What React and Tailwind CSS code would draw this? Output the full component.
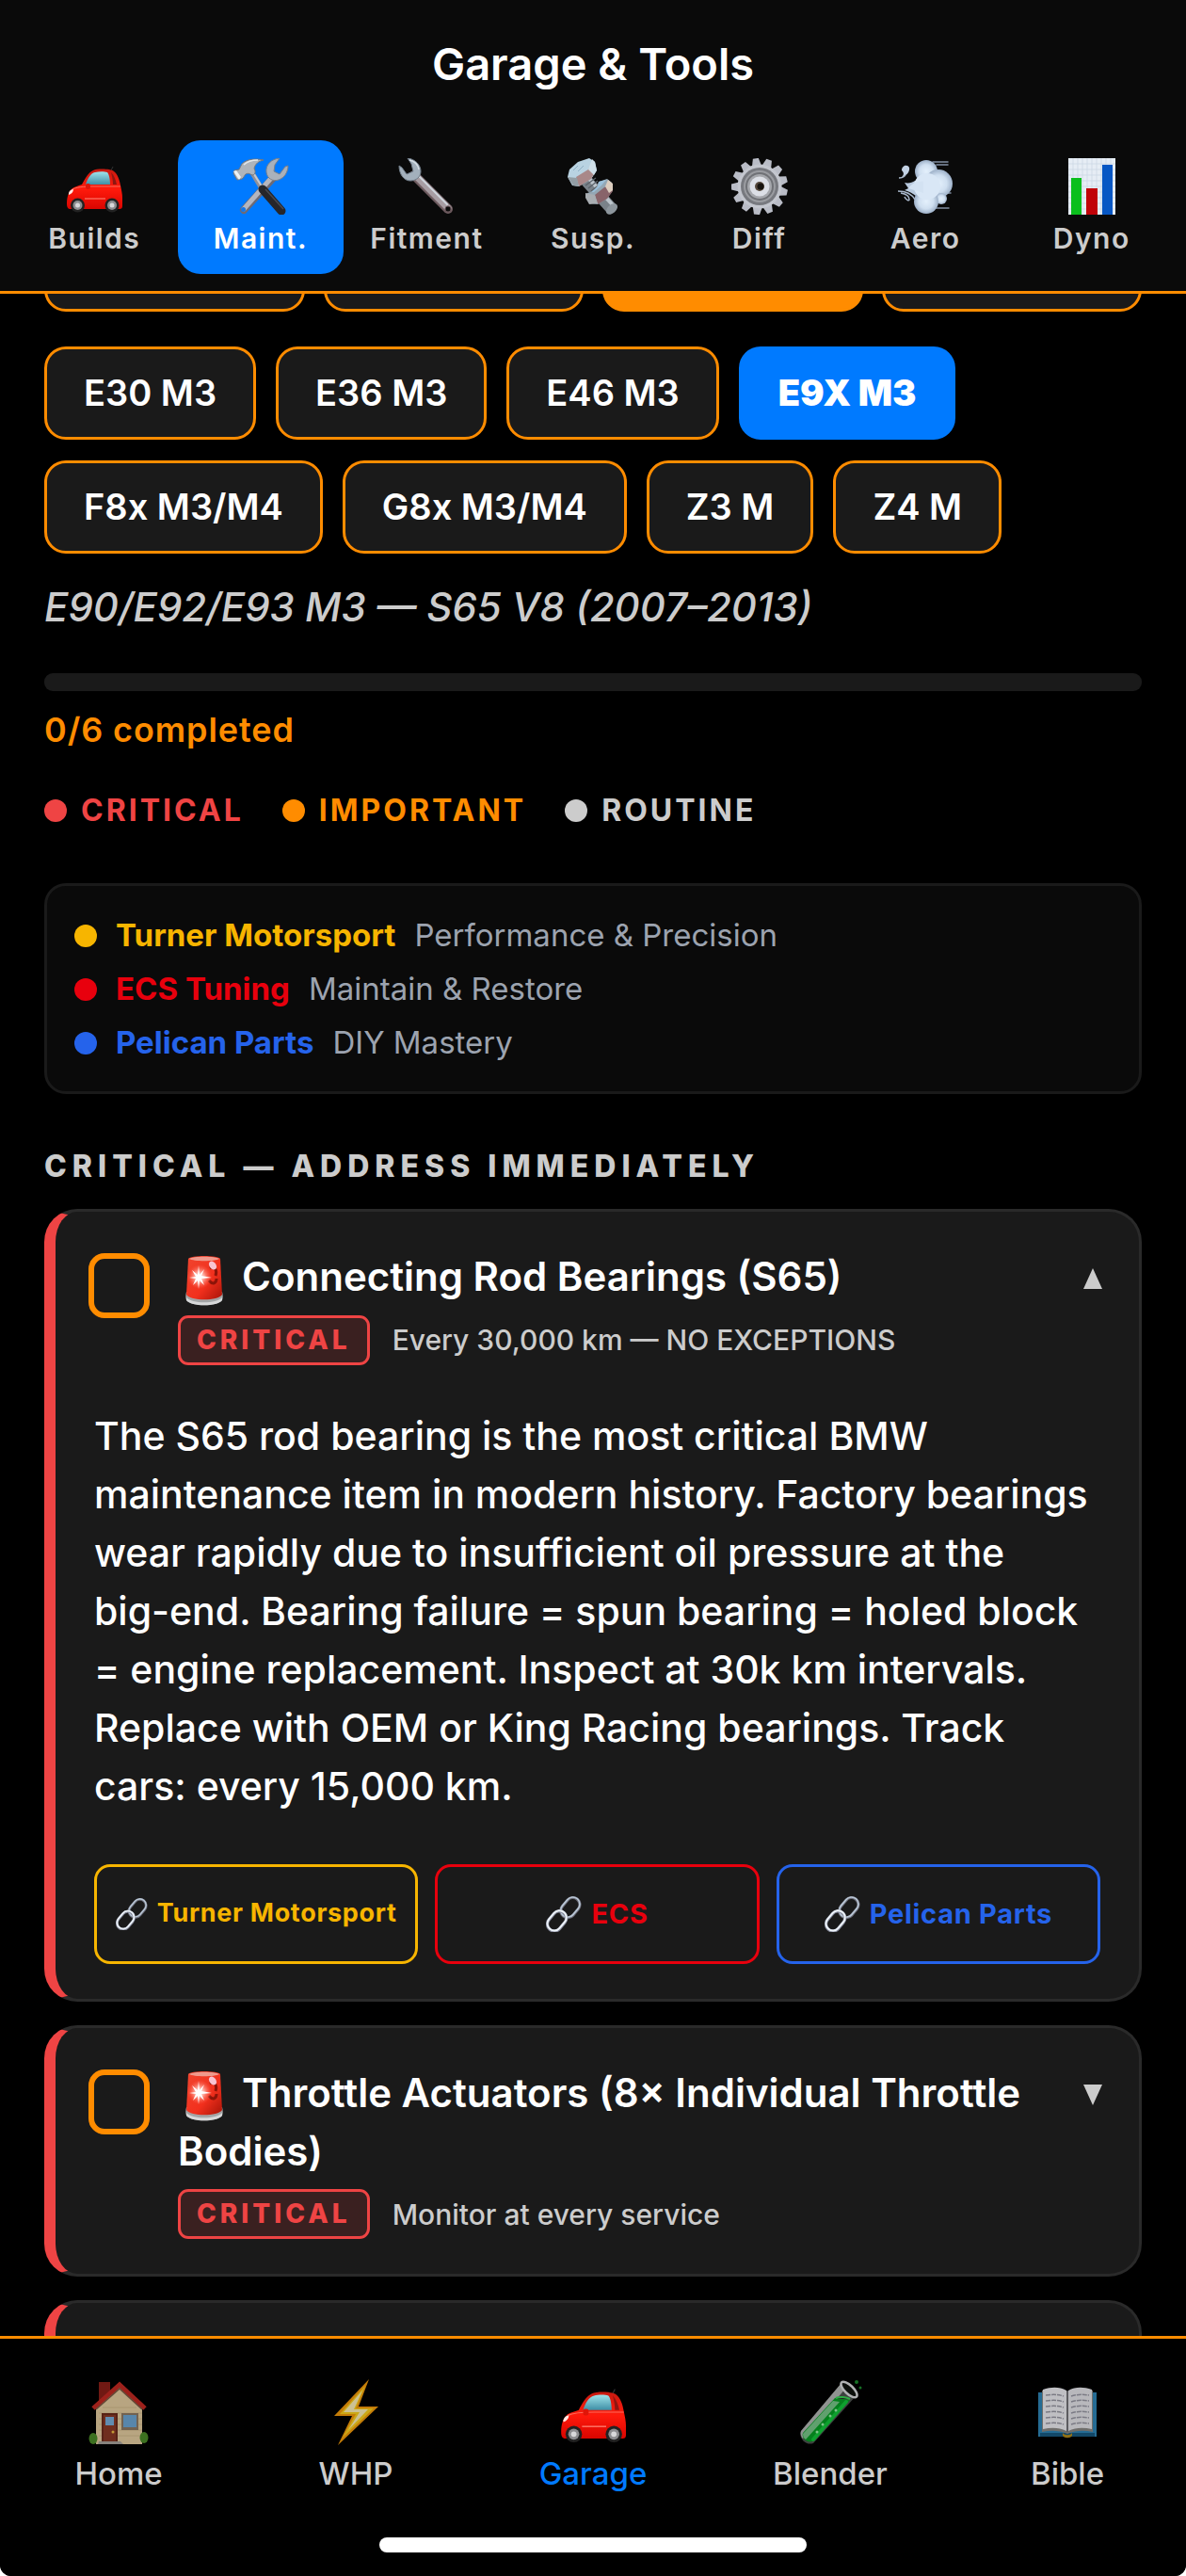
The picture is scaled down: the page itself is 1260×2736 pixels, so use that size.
import { useState } from "react";

const CarIcon = ({ className }) => (
  <svg className={className} viewBox="0 0 60 60" aria-hidden>
    <defs>
      <linearGradient id="carBody" x1="0" y1="0" x2="0" y2="1">
        <stop offset="0" stopColor="#c81a10" />
        <stop offset="0.5" stopColor="#ff1a0c" />
        <stop offset="1" stopColor="#d90500" />
      </linearGradient>
      <linearGradient id="carGlass" x1="0" y1="0" x2="0" y2="1">
        <stop offset="0" stopColor="#9fe3ea" />
        <stop offset="1" stopColor="#3f8fa6" />
      </linearGradient>
    </defs>
    <path d="M48 13l2-4" stroke="#333" strokeWidth="1" />
    <path
      d="M1 48c0-7 2-13 6-16 3-2 7-3 10-4 3-6 7-13 12-15 4-2 18-2 22 1 4 3 6 9 7 15 1 5 2 9 2 13v9c0 2-1 3-3 3H5c-3 0-4-2-4-6Z"
      fill="url(#carBody)"
    />
    <path d="M21 28c2-6 5-12 10-13 4-1 10-1 13 0 2 2 3 8 3 13Z" fill="url(#carGlass)" />
    <path d="M48 15c3 3 5 8 6 13h-4c0-5-1-9-2-13Z" fill="#8e1712" />
    <path d="M7 33c6-3 16-3 24-3h27" stroke="#ff6a5a" strokeWidth="1" fill="none" />
    <path d="M20 43h22" stroke="#ff7a6c" strokeWidth="1.2" />
    <path d="M3 37c1-3 3-4 5-4 0 3-2 5-5 6Z" fill="#ffe9e4" />
    <rect x="21" y="27" width="5" height="6" rx="2" fill="#e01508" />
    <circle cx="12.500" cy="50" r="7.500" fill="#222" />
    <circle cx="12.500" cy="50" r="5" fill="#8d8d90" />
    <circle cx="12.500" cy="50" r="2.500" fill="#d8d8da" />
    <circle cx="49" cy="50" r="7.500" fill="#222" />
    <circle cx="49" cy="50" r="5" fill="#8d8d90" />
    <circle cx="49" cy="50" r="2.500" fill="#d8d8da" />
  </svg>
);

const ToolsIcon = ({ className }) => (
  <svg className={className} viewBox="0 0 60 60" aria-hidden>
    <path d="M44 20 12 55" stroke="#6e6a74" strokeWidth="8" strokeLinecap="round" />
    <path d="M43 19 12 54" stroke="#b5b6bf" strokeWidth="5" strokeLinecap="round" />
    <path
      d="M50 0c-9 1-15 7-14 15 1 7 7 10 13 8 6-2 10-8 10-15l-3 1-6 8-6-3 1-7Z"
      fill="#a9b1bb"
      stroke="#7b808a"
      strokeWidth="1"
    />
    <circle cx="11.500" cy="54.500" r="2.500" fill="#1577e8" />
    <path d="M20 14 32 34" stroke="#8f9099" strokeWidth="5" />
    <path d="M21 14 33 33" stroke="#c6c9cf" strokeWidth="2" />
    <path d="M32 33 52 56" stroke="#26262a" strokeWidth="9" strokeLinecap="round" />
    <path d="M35 33 54 54" stroke="#4a4a50" strokeWidth="1.500" />
    <path
      d="M10 6c5-5 14-6 23-4-5 1-9 4-10 9 2 3 1 6-1 7-3 0-4-3-8-1-2 2-2 4-4 5L5 23l-4-7 1-3 5-1Z"
      fill="#aeb4bb"
      stroke="#73777e"
      strokeWidth="1"
    />
    <path d="m1 14 3-1 5 7-2 3Z" fill="#eef1f4" />
    <path d="M12 7c4-4 9-5 15-5" stroke="#e3e7ea" strokeWidth="1.500" fill="none" />
  </svg>
);

const WrenchIcon = ({ className }) => (
  <svg className={className} viewBox="0 0 60 60" aria-hidden>
    <path d="M17 18 53 54" stroke="#6f5c60" strokeWidth="10" strokeLinecap="round" />
    <path d="M17 17 53 53" stroke="#a79da3" strokeWidth="7" strokeLinecap="round" />
    <path d="M20 17 52 49" stroke="#cfd5dc" strokeWidth="2" strokeLinecap="round" />
    <path
      d="M10 0c8 1 14 7 14 14 0 6-5 10-11 10C6 24 1 17 1 8l3 2 5 7 7-3-2-8Z"
      fill="#a3b0bc"
      stroke="#6f7b87"
      strokeWidth="1"
    />
    <path d="M12 2c5 1 9 5 10 10" stroke="#d5dee5" strokeWidth="1.500" fill="none" />
    <circle cx="53" cy="54" r="3" fill="#0a0a0a" stroke="#5d4c50" strokeWidth="1" />
  </svg>
);

const BoltNutIcon = ({ className }) => (
  <svg className={className} viewBox="0 0 60 60" aria-hidden>
    <path d="M23 24 50 54" stroke="#7a8289" strokeWidth="13" />
    <path d="M26 22 52 51" stroke="#bcc5cc" strokeWidth="4" />
    <ellipse cx="50" cy="54" rx="7" ry="4.500" transform="rotate(-42 50 54)" fill="#8d969d" />
    <path
      d="m20 26 10-7m-8 10 11-8m-8 11 10-8m-7 11 10-8"
      stroke="#596168"
      strokeWidth="1.200"
    />
    <path d="m3 20 2-8L14 4l12-4 6 4 2 9-6 9-13 8-7-1Z" fill="#b9d3e2" />
    <path d="m12 20 13-8 5-8 3 9-5 9-13 8Z" fill="#a98889" />
    <path d="m25 12 4-11 3 3 2 9-3 5Z" fill="#cfdfe8" />
    <path d="m3 20 10 1 2 9-6-1Z" fill="#939ea5" />
    <path d="m9 13 5-5m0 6 6-6" stroke="#8eb0c4" strokeWidth="1" />
    <path d="m36 25 9-3 5 4 1 8-6 9-10 6-9-1-4-7 2-4 8-2Z" fill="#94a7b4" />
    <path d="m32 39 10-8 8-3 1 7-6 8-10 6Z" fill="#88646a" />
    <path d="m43 30 3-7 5 4v7l-4 3Z" fill="#dccdbf" />
    <path d="m22 37 10 2 3 9-9 1-4-7Z" fill="#a8adb1" />
    <path d="m31 36 8-7 5-6-8 2-1 5-7 6Z" fill="#9bc0da" />
  </svg>
);

const teeth = [0, 1, 2, 3, 4, 5, 6, 7, 8, 9, 10, 11, 12];

const GearIcon = ({ className }) => (
  <svg className={className} viewBox="0 0 60 60" aria-hidden>
    {teeth.map((t) => (
      <path
        key={t}
        d="M25 8 27 0h6l2 8Z"
        fill="#b9bcc6"
        transform={`rotate(${t * 27.69 - 8} 30 30)`}
      />
    ))}
    <circle cx="30" cy="30" r="23.500" fill="#c3c6ce" />
    <circle cx="30" cy="30" r="20" fill="#77797f" />
    <circle cx="30" cy="30" r="17" fill="#9a9ca1" />
    <circle cx="30" cy="30" r="15" fill="#6f7176" />
    <circle cx="30" cy="30" r="13" fill="#a5a7ac" />
    <circle cx="30" cy="30" r="10.500" fill="#dcdfe6" />
    <circle cx="30" cy="30" r="5" fill="#55483c" />
    <circle cx="31" cy="30" r="3.500" fill="#17140f" />
  </svg>
);

const WindIcon = ({ className }) => (
  <svg className={className} viewBox="0 0 60 60" aria-hidden>
    <defs>
      <radialGradient id="puff">
        <stop offset="0" stopColor="#e4f0fc" />
        <stop offset="0.6" stopColor="#cfdff0" />
        <stop offset="1" stopColor="#9db0c8" />
      </radialGradient>
    </defs>
    <path
      d="M38 4h16M42 7h12M38 53h17M44 37h13"
      stroke="#8290a4"
      strokeWidth="1.500"
      strokeLinecap="round"
    />
    <path
      d="M8 26c4 1 8 0 11-2l10 1v14l-9 1c-4-3-8-5-12-6l4-2Z"
      fill="#b9cade"
    />
    <circle cx="31" cy="14" r="12" fill="url(#puff)" />
    <circle cx="44" cy="27" r="15" fill="url(#puff)" />
    <circle cx="47" cy="43" r="6" fill="url(#puff)" />
    <circle cx="31" cy="46" r="13" fill="url(#puff)" />
    <circle cx="32" cy="30" r="14" fill="#d9e7f6" />
    <path d="M12 32c4-5 8-8 16-7v12Z" fill="#d3e2f2" />
    <path d="M5 13c0-5 6-7 8-3 1 4-3 9-8 10 2-2 3-4 0-7Z" fill="#c3d2e4" />
    <path d="M2 21c3 0 5-1 7-3" stroke="#a9b8cb" strokeWidth="1.500" fill="none" />
    <path d="M1 35c8 0 14 2 18 9M4 37c6 1 9 4 9 7 0 2-4 0-5-3" stroke="#a9b8cb" strokeWidth="1.500" fill="none" />
  </svg>
);

const ChartIcon = ({ className }) => (
  <svg className={className} viewBox="0 0 60 60" aria-hidden>
    <rect x="5" y="0" width="50" height="60" fill="#e6edf5" />
    <path
      d="M10 0v60M15 0v60M20 0v60M25 0v60M30 0v60M35 0v60M40 0v60M45 0v60M50 0v60M5 6h50M5 12h50M5 18h50M5 24h50M5 30h50M5 36h50M5 42h50M5 48h50M5 54h50"
      stroke="#c9d5e2"
      strokeWidth="0.700"
    />
    <rect x="8" y="21" width="11" height="39" fill="#0abf1c" />
    <rect x="24" y="32" width="12" height="28" fill="#c00208" />
    <rect x="41" y="7" width="11" height="53" fill="#0757c4" />
  </svg>
);

const HomeIcon = ({ className }) => (
  <svg className={className} viewBox="0 0 70 70" aria-hidden>
    <rect x="14" y="3" width="12" height="22" fill="#8c2018" />
    <path d="M11 30 35 7l25 23v39H11Z" fill="#e6cfa2" />
    <path d="M18 30h36M14 36h46M14 42h46M14 48h46M14 54h46M14 60h46" stroke="#d0b788" strokeWidth="0.800" />
    <path d="M8 31 36 6l27 25" stroke="#c52a22" strokeWidth="5" fill="none" />
    <path d="M11 32 36 10l24 22" stroke="#7c5842" strokeWidth="1.500" fill="none" />
    <rect x="17" y="36" width="17" height="31" fill="#6d2c1c" />
    <rect x="19" y="38" width="13" height="28" fill="#8b3a26" />
    <rect x="21" y="40" width="9" height="9" fill="#7ab0dc" />
    <circle cx="29" cy="56" r="1.500" fill="#f3c244" />
    <rect x="38" y="36" width="18" height="18" fill="#8f7b64" />
    <rect x="40" y="38" width="14" height="13" fill="#6ea8d6" />
    <ellipse cx="8" cy="63" rx="4.500" ry="6" fill="#4c8c28" />
    <ellipse cx="62" cy="62" rx="4.500" ry="6" fill="#4c8c28" />
    <path d="M14 66h23l3 3H13Z" fill="#a9a39d" />
  </svg>
);

const BoltIcon = ({ className }) => (
  <svg className={className} viewBox="0 0 70 70" aria-hidden>
    <path d="M49 0 12 39h19L16 70l43-41H38Z" fill="#f59c0a" />
    <path d="M45 7 18 37h17L21 62l33-31H35Z" fill="#ffd21c" />
    <path d="M42 12 22 35h17L27 54l21-22H33Z" fill="#fff3b8" />
  </svg>
);

const TubeIcon = ({ className }) => (
  <svg className={className} viewBox="0 0 70 70" aria-hidden>
    <path d="M47 4 4 55c-3 7 5 16 13 13l46-51Z" fill="#4d524f" />
    <path d="M47 4 4 55c-1 3 0 6 2 8L52 9Z" fill="#b4b8b6" />
    <path d="M40 20 6 57c-2 5 4 11 10 9l40-44Z" fill="#07a025" />
    <path d="M38 23 6 58c0 3 1 5 3 6l36-40Z" fill="#79c98a" />
    <path d="M52 24 17 64" stroke="#12c93a" strokeWidth="4" strokeLinecap="round" />
    <ellipse cx="55" cy="11" rx="11" ry="4.500" transform="rotate(44 55 11)" fill="#101410" stroke="#dcdfe0" strokeWidth="2.500" />
    <path d="M41 20c4-2 11-1 15 1" stroke="#38d955" strokeWidth="2" />
    <circle cx="35" cy="39" r="1.500" fill="#9df5aa" />
    <circle cx="27" cy="48" r="1.500" fill="#9df5aa" />
    <circle cx="41" cy="33" r="1.500" fill="#9df5aa" />
    <circle cx="21" cy="56" r="1.500" fill="#9df5aa" />
    <circle cx="63" cy="3" r="2" fill="#1c8d2e" />
    <circle cx="67" cy="9" r="1.500" fill="#1c8d2e" />
  </svg>
);

const BookIcon = ({ className }) => (
  <svg className={className} viewBox="0 0 70 70" aria-hidden>
    <path d="M4 14h62v47H4Z" fill="#2f86b8" />
    <path d="M6 57h58v4H6Z" fill="#185a82" />
    <path d="M8 12c9-3 19-3 27 1 8-4 18-4 27-1v44c-9-2-18-2-27 2-9-4-18-4-27-2Z" fill="#8b8a86" />
    <path d="M9 11c9-3 18-3 25 1v43c-8-4-16-4-25-2Z" fill="#efeff4" />
    <path d="M61 11c-9-3-18-3-25 1v43c8-4 16-4 25-2Z" fill="#e6e6ec" />
    <path
      d="M12 17c7-1 13-1 19 1m-19 5c7-1 13-1 19 1m-19 5c7-1 13-1 19 1m-19 5c7-1 13-1 19 1m-19 5c7-1 13-1 19 1m-19 5c7-1 13-1 19 1M39 18c6-2 12-2 19-1m-19 7c6-2 12-2 19-1m-19 7c6-2 12-2 19-1m-19 7c6-2 12-2 19-1m-19 7c6-2 12-2 19-1m-19 7c6-2 12-2 19-1"
      stroke="#9a9aa6"
      strokeWidth="1.500"
      strokeDasharray="5 1"
      fill="none"
    />
    <path d="M35 12v44" stroke="#6d6d74" strokeWidth="1.500" />
    <path d="M30 57c2 3 8 3 10 0v3c-2 3-8 3-10 0Z" fill="#b58c1d" />
  </svg>
);

const SirenIcon = ({ className }) => (
  <svg className={className} viewBox="0 0 56 56" aria-hidden>
    <defs>
      <linearGradient id="sirenDome" x1="0" y1="0" x2="1" y2="1">
        <stop offset="0" stopColor="#f0452f" />
        <stop offset="0.6" stopColor="#f2301d" />
        <stop offset="1" stopColor="#a81408" />
      </linearGradient>
      <radialGradient id="sirenGlow">
        <stop offset="0" stopColor="#fff" />
        <stop offset="0.4" stopColor="#ffb0a4" stopOpacity="0.900" />
        <stop offset="1" stopColor="#ff5a48" stopOpacity="0" />
      </radialGradient>
    </defs>
    <path d="M9 40h38c1 4 1 7 0 9-5 7-33 7-38 0-1-2-1-5 0-9Z" fill="#a3a5a6" />
    <path d="M9 46c6 7 32 7 38 0v3c-5 7-33 7-38 0Z" fill="#d7d8d9" />
    <path d="M11 5c2-4 32-4 34 0l2 38c-4 7-34 7-38 0Z" fill="url(#sirenDome)" />
    <path d="M12 5c4-3 28-3 32 0-4 3-28 3-32 0Z" fill="#ef9a8d" />
    <path d="M34 15c5-3 8 2 6 8M33 28c4 5 8 3 8-2" stroke="#8c1409" strokeWidth="3" fill="none" />
    <ellipse cx="37" cy="12" rx="3.500" ry="5" transform="rotate(-35 37 12)" fill="#f8c3d2" />
    <circle cx="23" cy="24" r="13" fill="url(#sirenGlow)" />
    <path
      d="m22 12 1 10 5-6-3 7 11 2-11 1 3 7-5-5-1 9-1-9-5 5 3-7-7-1 7-1-4-7 6 5Z"
      fill="#fff"
    />
  </svg>
);

const LinkIcon = ({ className }) => (
  <svg className={className} viewBox="2 2 36 36" fill="none" aria-hidden>
    <rect x="-7" y="-11" width="14" height="22" rx="7" transform="translate(26.500 13.500) rotate(40)" stroke="#6b6c78" strokeWidth="3" />
    <rect x="-7" y="-11" width="14" height="22" rx="7" transform="translate(26.500 13) rotate(40)" stroke="#b9c7d6" strokeWidth="1.600" />
    <rect x="-7" y="-11" width="14" height="22" rx="7" transform="translate(13 27) rotate(40)" stroke="#85899a" strokeWidth="3.200" />
    <rect x="-7" y="-11" width="14" height="22" rx="7" transform="translate(13 26.500) rotate(40)" stroke="#eef4fa" strokeWidth="1.900" />
  </svg>
);

const tools = [
  { id: "builds", label: "Builds", Icon: CarIcon },
  { id: "maint", label: "Maint.", Icon: ToolsIcon },
  { id: "fitment", label: "Fitment", Icon: WrenchIcon },
  { id: "susp", label: "Susp.", Icon: BoltNutIcon },
  { id: "diff", label: "Diff", Icon: GearIcon },
  { id: "aero", label: "Aero", Icon: WindIcon },
  { id: "dyno", label: "Dyno", Icon: ChartIcon },
];

const chassis = [
  "E30 M3",
  "E36 M3",
  "E46 M3",
  "E9X M3",
  "F8x M3/M4",
  "G8x M3/M4",
  "Z3 M",
  "Z4 M",
];

const vendors = [
  { name: "Turner Motorsport", note: "Performance & Precision", dot: "bg-[#f7b500]", text: "text-[#f7b500]" },
  { name: "ECS Tuning", note: "Maintain & Restore", dot: "bg-[#e8000d]", text: "text-[#e8000d]" },
  { name: "Pelican Parts", note: "DIY Mastery", dot: "bg-[#2563eb]", text: "text-[#2563eb]" },
];

const priorities = [
  { name: "CRITICAL", dot: "bg-[#ef4444]", text: "text-[#ef4444]" },
  { name: "IMPORTANT", dot: "bg-[#ff8c00]", text: "text-[#ff8c00]" },
  { name: "ROUTINE", dot: "bg-[#cccccc]", text: "text-[#cccccc]" },
];

const shopLinks = [
  { name: "Turner Motorsport", style: "border-[#f7b500] text-[#f7b500] text-[27px]", icon: "h-[34px] w-[34px]" },
  { name: "ECS", style: "border-[#e8000d] text-[#e8000d] text-[29px]", icon: "h-[38px] w-[38px]" },
  { name: "Pelican Parts", style: "border-[#2563eb] text-[#2563eb] text-[29px]", icon: "h-[38px] w-[38px]" },
];

const items = [
  {
    id: "rod-bearings",
    title: "Connecting Rod Bearings (S65)",
    interval: "Every 30,000 km — NO EXCEPTIONS",
    detail: (
      <>
        The S65 rod bearing is the most critical BMW maintenance item in modern history. Factory
        bearings wear rapidly due to insufficient oil pressure at the{" "}
        <span className="whitespace-nowrap">big-end.</span> Bearing failure = spun bearing = holed
        block = engine replacement. Inspect at 30k km intervals. Replace with OEM or King Racing
        bearings. Track cars: every 15,000 km.
      </>
    ),
  },
  {
    id: "throttle",
    title: "Throttle Actuators (8× Individual Throttle Bodies)",
    interval: "Monitor at every service",
  },
];

const navItems = [
  { id: "home", label: "Home", Icon: HomeIcon },
  { id: "whp", label: "WHP", Icon: BoltIcon },
  { id: "garage", label: "Garage", Icon: CarIcon },
  { id: "blender", label: "Blender", Icon: TubeIcon },
  { id: "bible", label: "Bible", Icon: BookIcon },
];

const cardClass =
  "rounded-[35px] border-[3px] border-l-[12px] border-[#2a2a2a] border-l-[#ef4444] bg-[#1a1a1a]";

const Header = ({ tool, setTool }) => (
  <header className="shrink-0 border-b-[3px] border-[#ff8c00] bg-[#0a0a0a] px-3 pt-[38px] pb-[18px]">
    <h1 className="text-center text-[47px] leading-[60px] font-semibold">Garage & Tools</h1>
    <div className="mt-[51px] grid grid-cols-7">
      {tools.map(({ id, label, Icon }) => (
        <button
          key={id}
          type="button"
          onClick={() => setTool(id)}
          className={`flex flex-col items-center rounded-3xl pt-[19px] pb-5 ${
            tool === id ? "bg-[#007aff] text-white" : "text-[#cccccc]"
          }`}
        >
          <Icon className="h-[60px] w-[60px]" />
          <span className="mt-[7px] text-[30px] leading-9 font-semibold tracking-wider">{label}</span>
        </button>
      ))}
    </div>
  </header>
);

const ServiceCard = ({ item, open, onToggle }) => (
  <article className={`${cardClass} pt-[38px] pb-[37px]`}>
    <div className="flex items-start pr-[37px] pl-[35px]">
      <input
        type="checkbox"
        id={item.id}
        className="mt-[6px] h-[69px] w-[65px] shrink-0 appearance-none rounded-[17px] border-[6px] border-[#ff8c00] checked:bg-[#ff8c00]"
      />
      <div className="ml-[30px] min-w-0 flex-1">
        <label htmlFor={item.id} className="block text-[42px] leading-[62px] font-semibold">
          <SirenIcon className="mr-3 inline h-14 w-14" />
          {item.title}
        </label>
        <div className="mt-[9px] flex items-center gap-6">
          <span className="rounded-[11px] border-[3px] border-[#ef4444] bg-[#ef4444]/15 px-[17px] text-[28px] leading-[47px] font-extrabold tracking-[4px] text-[#ef4444]">
            CRITICAL
          </span>
          <span className="text-[30px] leading-9 font-medium text-[#cccccc]">{item.interval}</span>
        </div>
      </div>
      <button
        type="button"
        onClick={onToggle}
        aria-label={open ? "Collapse" : "Expand"}
        aria-expanded={open}
        className="ml-7 flex h-[66px] w-6 shrink-0 items-center justify-center text-[#cccccc]"
      >
        <svg className={open ? "h-6 w-6" : "h-6 w-6 rotate-180"} viewBox="0 0 24 24" aria-hidden>
          <path d="M12 1 22 23H2Z" fill="currentColor" />
        </svg>
      </button>
    </div>
    {open && item.detail && (
      <div className="px-[41px]">
        <p className="mt-11 text-[41px] leading-[62px] font-medium">{item.detail}</p>
        <div className="mt-[52px] grid grid-cols-3 gap-[18px]">
          {shopLinks.map((shop) => (
            <a
              key={shop.name}
              href="#shop"
              className={`flex h-[106px] items-center justify-center gap-[10px] rounded-[17px] border-[3px] font-bold tracking-wide whitespace-nowrap ${shop.style}`}
            >
              <LinkIcon className={shop.icon} />
              {shop.name}
            </a>
          ))}
        </div>
      </div>
    )}
  </article>
);

const BottomNav = () => (
  <nav className="shrink-0 border-t-[3px] border-[#ff8c00] bg-black pt-[43px] pb-[25px]" aria-label="Primary">
    <ul className="grid grid-cols-5">
      {navItems.map(({ id, label, Icon }) => {
        const active = id === "garage";
        return (
          <li key={id}>
            <a
              href={`#${id}`}
              className={`flex flex-col items-center ${active ? "text-[#007aff]" : "text-[#cccccc]"}`}
            >
              <Icon className={active ? "h-[70px] w-[70px]" : "h-[70px] w-[70px] opacity-80"} />
              <span className="mt-[10px] text-[33px] leading-10 font-medium">{label}</span>
            </a>
          </li>
        );
      })}
    </ul>
    <div className="mx-auto mt-12 h-4 w-[36%] rounded-full bg-white" />
  </nav>
);

const App = () => {
  const [tool, setTool] = useState("maint");
  const [model, setModel] = useState("E9X M3");
  const [openId, setOpenId] = useState("rod-bearings");

  return (
    <div className="bg-white">
      <div className="flex h-screen flex-col overflow-hidden rounded-b-xl bg-black font-['Inter',sans-serif] text-white">
        <Header tool={tool} setTool={setTool} />

        <main className="min-h-0 flex-1 overflow-hidden px-[47px]">
          {/* series row, scrolled mostly under the header */}
          <div className="-mt-20 grid grid-cols-4 gap-5">
            {[1, 2, 3, 4].map((n) => (
              <button
                key={n}
                type="button"
                aria-label={`Series ${n}`}
                className={`h-[99px] rounded-[23px] border-[3px] border-[#ff8c00] ${
                  n === 3 ? "bg-[#ff8c00]" : "bg-[#1a1a1a]"
                }`}
              />
            ))}
          </div>

          <div className="mt-[37px] flex flex-wrap gap-x-[21px] gap-y-[22px]">
            {chassis.map((name) => (
              <button
                key={name}
                type="button"
                onClick={() => setModel(name)}
                className={`h-[99px] rounded-[23px] border-[3px] px-[39px] text-[38px] ${
                  model === name
                    ? "border-[#007aff] bg-[#007aff] font-black"
                    : "border-[#ff8c00] bg-[#1a1a1a] font-semibold"
                }`}
              >
                {name}
              </button>
            ))}
          </div>

          <p className="mt-[31px] text-[42px] leading-[52px] font-medium text-[#cccccc] italic">
            E90/E92/E93 M3 — S65 V8 (2007–2013)
          </p>

          <div
            role="progressbar"
            aria-label="Completed"
            aria-valuenow={0}
            aria-valuemax={6}
            className="mt-11 h-[19px] rounded-[9px] bg-[#1a1a1a]"
          />
          <p className="mt-[19px] text-[36px] leading-[44px] font-semibold tracking-wide text-[#ff8c00]">
            0/6 completed
          </p>

          <ul className="mt-[43px] flex gap-[41px] text-[32px] leading-[42px] font-bold tracking-[3px]">
            {priorities.map((p) => (
              <li key={p.name} className={`flex items-center gap-[15px] ${p.text}`}>
                <span className={`h-6 w-6 rounded-full ${p.dot}`} />
                {p.name}
              </li>
            ))}
          </ul>

          <ul className="mt-14 rounded-[23px] border-[3px] border-[#1a1a1a] bg-[#0a0a0a] px-[29px] pt-6 pb-[23px] text-[33px] leading-[57px]">
            {vendors.map((v) => (
              <li key={v.name} className="flex items-center">
                <span className={`h-6 w-6 rounded-full ${v.dot}`} />
                <span className={`ml-5 font-bold ${v.text}`}>{v.name}</span>
                <span className="ml-5 text-[#9ca3af]">{v.note}</span>
              </li>
            ))}
          </ul>

          <h2 className="mt-[55px] text-[32px] leading-[44px] font-extrabold tracking-[6px] text-[#cccccc]">
            CRITICAL — ADDRESS IMMEDIATELY
          </h2>

          <div className="mt-[23px] flex flex-col gap-[25px]">
            {items.map((item) => (
              <ServiceCard
                key={item.id}
                item={item}
                open={openId === item.id}
                onToggle={() => setOpenId(openId === item.id ? null : item.id)}
              />
            ))}
            <article className={`${cardClass} h-60`} />
          </div>
        </main>

        <BottomNav />
      </div>
    </div>
  );
};

export default App;
